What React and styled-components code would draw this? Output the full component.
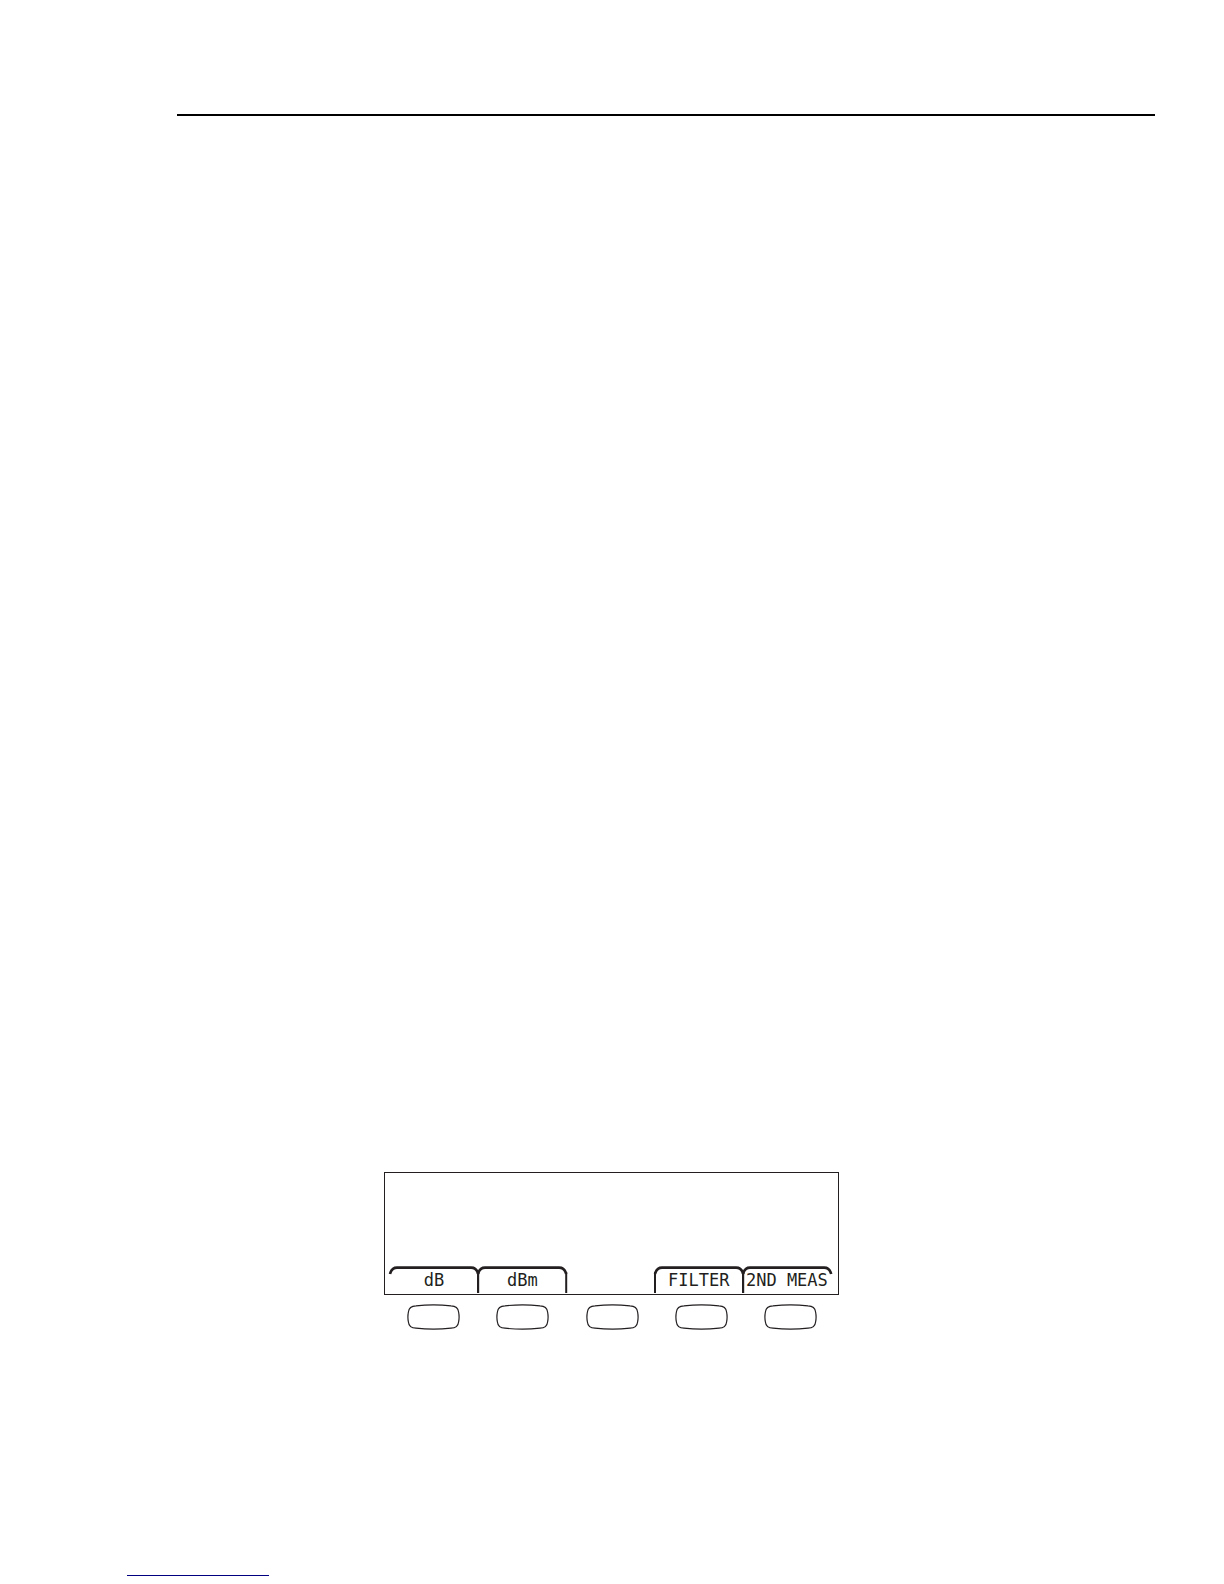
import React from 'react';
import styled, {createGlobalStyle} from 'styled-components';

const GlobalStyle = createGlobalStyle`
  body {
    margin: 0;
    background-color: #ffffff;
  }
`

const Page = styled.div`
  box-sizing: border-box;
  min-height: 100vh;
  padding: 114px 69px 8px 127px;
  display: flex;
  flex-direction: column;
`

const HeaderRule = styled.hr`
  align-self: stretch;
  height: 2px;
  margin: 0 0 0 50px;
  border: 0;
  background-color: #000000;
`

const FooterRule = styled.hr`
  width: 142px;
  height: 1px;
  margin: auto 0 0 0;
  border: 0;
  background-color: #000080;
`

const Meter = styled.main`
  width: 100%;
  max-width: 455px;
  margin: 1056px 0 0 257px;
`

const Display = styled.section`
  box-sizing: border-box;
  height: 123px;
  padding: 0 7px 0 5px;
  border: 1px solid #231f20;
  display: flex;
  align-items: flex-end;
`

const Tabs = styled.div`
  flex: 1;
  display: grid;
  grid-template-columns: repeat(5, 1fr);
`

const Tab = styled.div`
  position: relative;
  height: 28px;
  display: flex;
  justify-content: center;
`

const Outline = styled.svg`
  position: absolute;
  top: 0;
  left: 0;
  width: 100%;
  height: 28px;
  overflow: visible;
  fill: none;
  stroke: #231f20;
`

const TabLabel = styled.label`
  padding-top: 4px;
  font-family: "DejaVu Sans Mono", monospace;
  font-size: 17px;
  line-height: 20px;
  white-space: nowrap;
  color: #231f20;
`

const Keys = styled.div`
  display: flex;
  justify-content: space-between;
  padding: 9px 22px 0 23px;
`

const Key = styled.button`
  width: 53px;
  height: 26px;
  padding: 0;
  border: 0;
  background: none;
  cursor: pointer;
`

const KeyShape = styled.svg`
  display: block;
  fill: #ffffff;
  stroke: #231f20;
  stroke-width: 1.2;
`

const softkeys = [
  {id: 'f1', label: 'dB', openLeft: true},
  {id: 'f2', label: 'dBm'},
  {id: 'f3', label: ''},
  {id: 'f4', label: 'FILTER'},
  {id: 'f5', label: '2ND MEAS', openRight: true},
];

// the outermost tabs stop after the corner, the others run down to the frame
function TabOutline({openLeft, openRight}) {
  return (
    <Outline viewBox="0 0 88 28" preserveAspectRatio="none" aria-hidden="true">
      <path strokeWidth="2.6" d="M0 8 C1 4 3 1.6 7 1.6 H81 C85 1.6 87 4 88 8" />
      {!openLeft && <path strokeWidth="2" d="M0 6 V27" />}
      {!openRight && <path strokeWidth="2" d="M88 6 V27" />}
    </Outline>
  );
}

function App() {
  return (
    <>
      <GlobalStyle />
      <Page>
        <HeaderRule />
        <Meter>
          <Display>
            <Tabs>
              {softkeys.map((item) => (
                <Tab key={item.id}>
                  {item.label && <TabOutline openLeft={item.openLeft} openRight={item.openRight} />}
                  {item.label && <TabLabel htmlFor={item.id}>{item.label}</TabLabel>}
                </Tab>
              ))}
            </Tabs>
          </Display>
          <Keys>
            {softkeys.map((item) => (
              <Key key={item.id} id={item.id} type="button" aria-label={item.label ? undefined : 'F3'}>
                <KeyShape width="53" height="26" viewBox="0 0 53 26" aria-hidden="true">
                  <path d="M9 1.8 Q26.5 0 44 1.8 Q51 2 51.6 8 Q52.6 13 51.6 18 Q51 24 44 24.2 Q26.5 26 9 24.2 Q2 24 1.4 18 Q0.4 13 1.4 8 Q2 2 9 1.8 Z" />
                </KeyShape>
              </Key>
            ))}
          </Keys>
        </Meter>
        <FooterRule />
      </Page>
    </>
  );
}

export default App;
